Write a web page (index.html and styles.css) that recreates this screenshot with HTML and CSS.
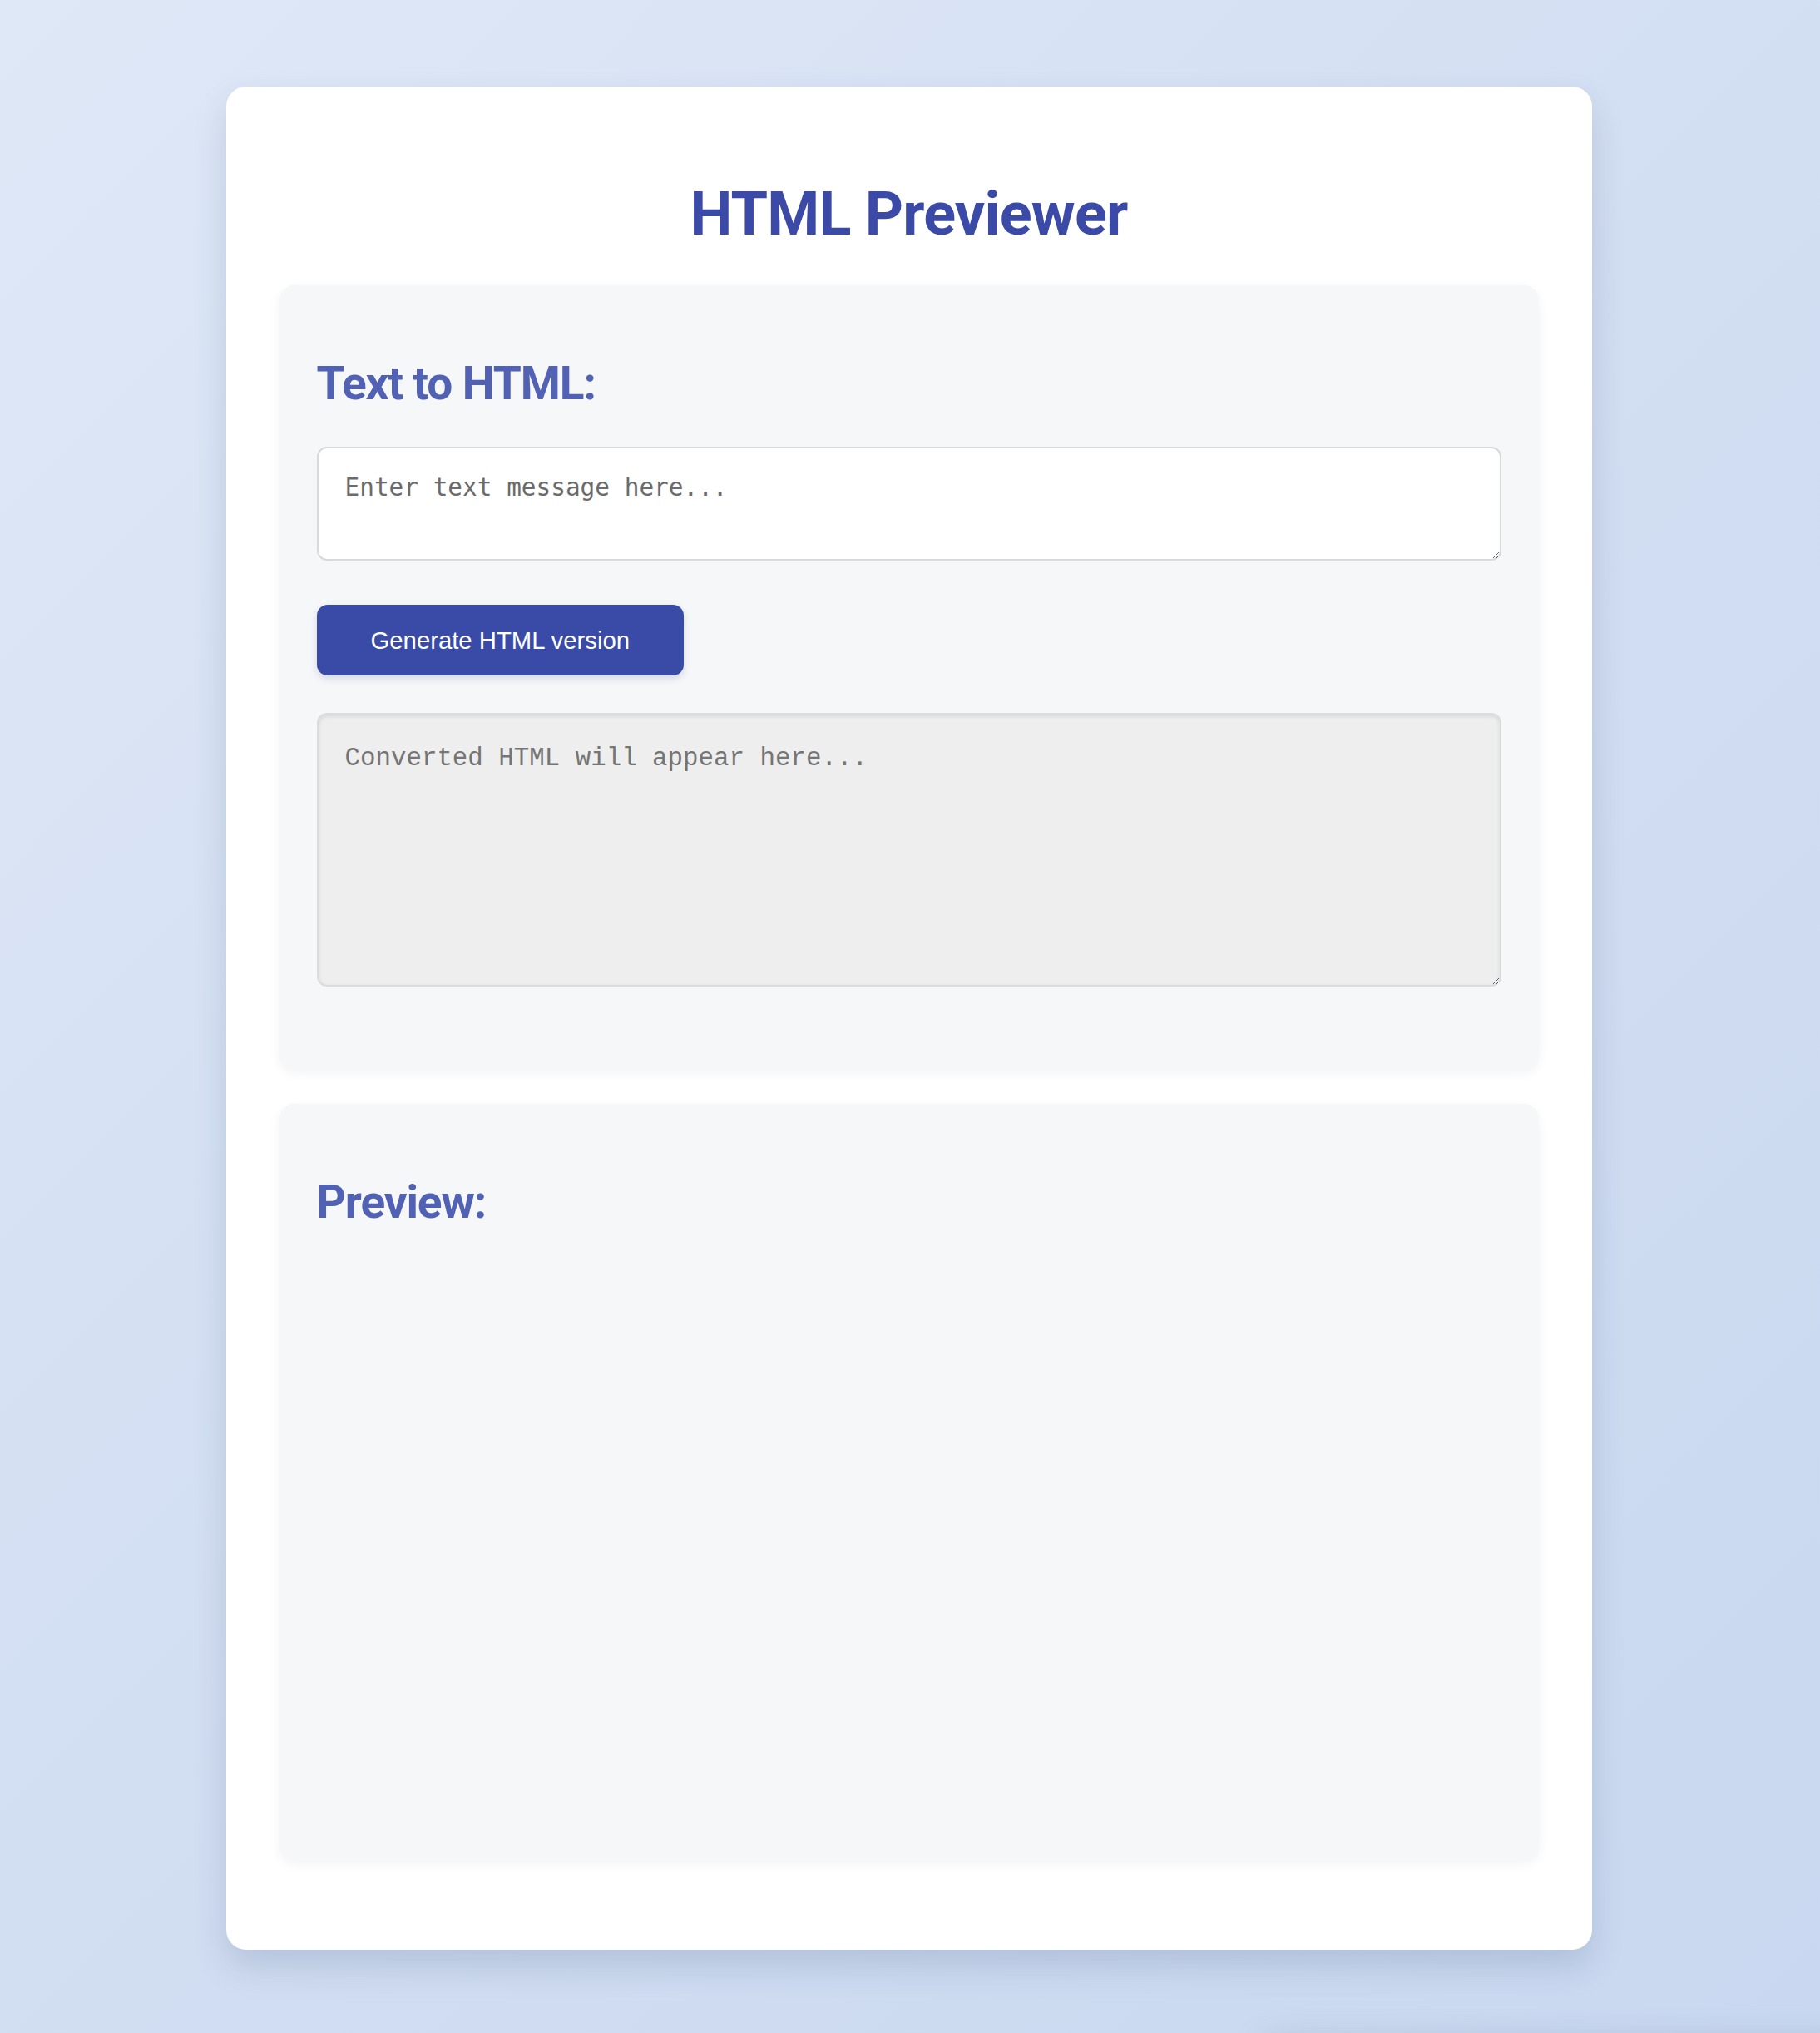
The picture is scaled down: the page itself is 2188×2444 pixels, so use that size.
FILE: index.html
```html
<!DOCTYPE html>
<html lang="en">
<head>
<meta charset="utf-8">
<title>HTML Previewer</title>
<link rel="stylesheet" href="styles.css">
</head>
<body>
  <main class="card">
    <h1 class="title">HTML Previewer</h1>
    <section class="panel panel-input">
      <h2 class="panel-title">Text to HTML:</h2>
      <textarea class="text-input" placeholder="Enter text message here..."></textarea>
      <button class="btn" type="button">Generate HTML version</button>
      <textarea class="html-output" placeholder="Converted HTML will appear here..." readonly></textarea>
    </section>
    <section class="panel panel-preview">
      <h2 class="panel-title">Preview:</h2>
      <div class="preview"></div>
    </section>
  </main>
  <div class="offscreen-shadow"></div>
</body>
</html>
```

FILE: styles.css
```css
html, body {
  margin: 0;
  padding: 0;
}
body {
  min-height: 2444px;
  box-sizing: border-box;
  padding: 104px 3px 40px 0;
  background: linear-gradient(135deg, #dfe8f7 0%, #d2def2 50%, #c9d8f0 100%);
  font-family: Roboto, "Liberation Sans", sans-serif;
  overflow: hidden;
}
.card {
  box-sizing: border-box;
  width: 1642px;
  margin: 0 auto;
  padding: 112px 64px 107px;
  background: #ffffff;
  border-radius: 24px;
  box-shadow: 0 20px 40px rgba(40, 60, 100, 0.16);
  display: flex;
  flex-direction: column;
}
.title {
  margin: 0 0 43px;
  text-align: center;
  font-family: Roboto, sans-serif;
  font-weight: 700;
  font-size: 72px;
  line-height: 84px;
  letter-spacing: -0.8px;
  color: #3a4aa6;
}
.panel {
  box-sizing: border-box;
  background: #f6f7f9;
  border-radius: 18px;
  box-shadow: 0 4px 14px rgba(0, 0, 0, 0.05);
  padding: 86px 45px 100px;
  display: flex;
  flex-direction: column;
  align-items: flex-start;
}
.panel + .panel {
  margin-top: 41px;
}
.panel-title {
  margin: 0 0 44px;
  font-family: Roboto, sans-serif;
  font-weight: 700;
  font-size: 55px;
  line-height: 64px;
  letter-spacing: -1.1px;
  color: #5161b4;
}
.text-input,
.html-output {
  box-sizing: border-box;
  width: 100%;
  padding: 30px 32px;
  border-radius: 12px;
  line-height: 34px;
  resize: vertical;
  outline: none;
  display: block;
}
.text-input {
  height: 137px;
  background: #ffffff;
  border: 2px solid #d9d9dc;
  font-family: "DejaVu Sans Mono", monospace;
  font-size: 29.4px;
}
.text-input::placeholder {
  color: #6b6b6b;
}
.btn {
  margin-top: 53px;
  padding: 0 65px;
  height: 85px;
  border: none;
  border-radius: 13px;
  background: #3a4ba7;
  color: #ffffff;
  font-family: "Liberation Sans", Arial, sans-serif;
  font-size: 29.3px;
  box-shadow: 0 4px 10px rgba(30, 40, 100, 0.15);
  cursor: pointer;
}
.html-output {
  margin-top: 45px;
  height: 329px;
  background: #eeeeee;
  border: 2px solid #dcdcdc;
  box-shadow: inset 0 2px 5px rgba(0, 0, 0, 0.1);
  font-family: "Liberation Mono", "Courier New", monospace;
  font-size: 30.8px;
  padding-top: 36px;
}
.html-output::placeholder {
  color: #757575;
}
.panel-preview {
  height: 910px;
}
.preview {
  width: 100%;
  flex: 1;
}
.offscreen-shadow {
  position: fixed;
  left: 1520px;
  right: -40px;
  top: 2470px;
  height: 200px;
  background: #c9d8f0;
  box-shadow: 0 -12px 40px rgba(40, 60, 100, 0.22);
}
```
